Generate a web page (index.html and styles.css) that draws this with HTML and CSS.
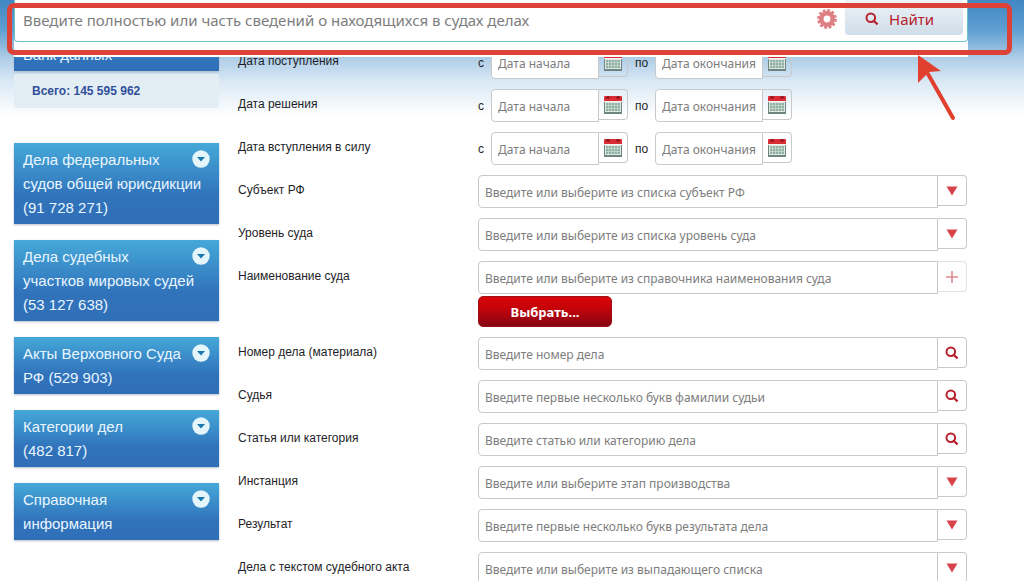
FILE: index.html
```html
<!DOCTYPE html>
<html lang="ru">
<head>
<meta charset="utf-8">
<title>Поиск судебных дел</title>
<link rel="stylesheet" href="styles.css">
</head>
<body>
<svg class="defs" aria-hidden="true">
  <symbol id="lens" viewBox="0 0 14 14"><circle cx="5.8" cy="5.8" r="4.3" fill="none" stroke="#b8202c" stroke-width="2"/><path d="M8 8.2 12.6 12.4" stroke="#b8202c" stroke-width="2.2"/></symbol>
  <symbol id="tri" viewBox="0 0 12 10"><path d="M.5.5h11L6 9.5z" fill="#d6434a"/></symbol>
  <symbol id="plus" viewBox="0 0 12 12"><path d="M6 0v12M0 6h12" stroke="#e58a8e" stroke-width="1.6"/></symbol>
  <symbol id="cal" viewBox="0 0 20 20">
    <path d="M1 6h18v13H1z" fill="#6f8580"/><path d="M2 6h16v11H2z" fill="#dfe8e2"/>
    <path d="M3 8h14v8H3z" fill="#8fb0a2"/>
    <path d="M3 10.5h14M3 13.5h14M5.5 8v8M8.500 8v8M11.500 8v8M14.500 8v8" stroke="#cfe0d6" stroke-width=".7"/>
    <path d="M1 2q0-1 1-1h16q1 0 1 1v4H1z" fill="#d92c34"/>
    <path d="M3.500 2.500h3M13.500 2.500h3" stroke="#7e1118" stroke-width="2"/><path d="M1 6.500h18" stroke="#f4f4f4"/>
  </symbol>
  <symbol id="down" viewBox="0 0 18 18"><circle cx="9" cy="9" r="8.700" fill="#e4f5fb"/><path d="M5 7h8l-4 4.500z" fill="#1b78ae"/></symbol>
</svg>

<header class="top">
  <form class="search">
    <input class="search-text" type="text" aria-label="Поиск" placeholder="Введите полностью или часть сведений о находящихся в судах делах">
    <button class="gear" type="button" aria-label="Настройки">
      <svg width="20" height="20" viewBox="-10 -10 20 20"><circle r="5.700" fill="none" stroke="#de7f84" stroke-width="4.600"/><circle r="8.700" fill="none" stroke="#de7f84" stroke-width="2.400" stroke-dasharray="2.800 1.755"/></svg>
    </button>
    <button class="find" type="button"><svg width="14" height="14"><use href="#lens"/></svg>Найти</button>
  </form>
</header>

<div class="page">
  <nav class="side">
    <section class="bank">
      <button class="block" type="button"><span>Банк данных</span></button>
      <p class="total">Всего: 145 595 962</p>
    </section>
    <button class="block" type="button"><span>Дела федеральных<br>судов общей юрисдикции<br>(91 728 271)</span><svg><use href="#down"/></svg></button>
    <button class="block" type="button"><span>Дела судебных<br>участков мировых судей<br>(53 127 638)</span><svg><use href="#down"/></svg></button>
    <button class="block" type="button"><span>Акты Верховного Суда<br>РФ (529 903)</span><svg><use href="#down"/></svg></button>
    <button class="block" type="button"><span>Категории дел<br>(482 817)</span><svg><use href="#down"/></svg></button>
    <button class="block" type="button"><span>Справочная<br>информация</span><svg><use href="#down"/></svg></button>
  </nav>

  <form class="fields">
    <div class="row">
      <label for="d1">Дата поступления</label>
      <div class="dates">
        <span class="from">с</span><input id="d1" type="text" placeholder="Дата начала"><button class="addon" type="button" aria-label="Календарь"><svg class="cal"><use href="#cal"/></svg></button>
        <span class="to">по</span><input type="text" aria-label="Поступление по" placeholder="Дата окончания"><button class="addon" type="button" aria-label="Календарь"><svg class="cal"><use href="#cal"/></svg></button>
      </div>
    </div>
    <div class="row">
      <label for="d2">Дата решения</label>
      <div class="dates">
        <span class="from">с</span><input id="d2" type="text" placeholder="Дата начала"><button class="addon" type="button" aria-label="Календарь"><svg class="cal"><use href="#cal"/></svg></button>
        <span class="to">по</span><input type="text" aria-label="Решение по" placeholder="Дата окончания"><button class="addon" type="button" aria-label="Календарь"><svg class="cal"><use href="#cal"/></svg></button>
      </div>
    </div>
    <div class="row">
      <label for="d3">Дата вступления в силу</label>
      <div class="dates">
        <span class="from">с</span><input id="d3" type="text" placeholder="Дата начала"><button class="addon" type="button" aria-label="Календарь"><svg class="cal"><use href="#cal"/></svg></button>
        <span class="to">по</span><input type="text" aria-label="Вступление в силу по" placeholder="Дата окончания"><button class="addon" type="button" aria-label="Календарь"><svg class="cal"><use href="#cal"/></svg></button>
      </div>
    </div>
    <div class="row">
      <label for="f1">Субъект РФ</label>
      <div class="combo"><input id="f1" type="text" placeholder="Введите или выберите из списка субъект РФ"><button class="addon" type="button" aria-label="Открыть список"><svg class="tri"><use href="#tri"/></svg></button></div>
    </div>
    <div class="row">
      <label for="f2">Уровень суда</label>
      <div class="combo"><input id="f2" type="text" placeholder="Введите или выберите из списка уровень суда"><button class="addon" type="button" aria-label="Открыть список"><svg class="tri"><use href="#tri"/></svg></button></div>
    </div>
    <div class="row">
      <label for="f3">Наименование суда</label>
      <div class="stack">
        <div class="combo"><input id="f3" type="text" placeholder="Введите или выберите из справочника наименования суда"><button class="addon faint" type="button" aria-label="Добавить"><svg class="plus"><use href="#plus"/></svg></button></div>
        <button class="choose" type="button">Выбрать...</button>
      </div>
    </div>
    <div class="row">
      <label for="f4">Номер дела (материала)</label>
      <div class="combo"><input id="f4" type="text" placeholder="Введите номер дела"><button class="addon" type="button" aria-label="Найти"><svg class="lens"><use href="#lens"/></svg></button></div>
    </div>
    <div class="row">
      <label for="f5">Судья</label>
      <div class="combo"><input id="f5" type="text" placeholder="Введите первые несколько букв фамилии судьи"><button class="addon" type="button" aria-label="Найти"><svg class="lens"><use href="#lens"/></svg></button></div>
    </div>
    <div class="row">
      <label for="f6">Статья или категория</label>
      <div class="combo"><input id="f6" type="text" placeholder="Введите статью или категорию дела"><button class="addon" type="button" aria-label="Найти"><svg class="lens"><use href="#lens"/></svg></button></div>
    </div>
    <div class="row">
      <label for="f7">Инстанция</label>
      <div class="combo"><input id="f7" type="text" placeholder="Введите или выберите этап производства"><button class="addon" type="button" aria-label="Открыть список"><svg class="tri"><use href="#tri"/></svg></button></div>
    </div>
    <div class="row">
      <label for="f8">Результат</label>
      <div class="combo"><input id="f8" type="text" placeholder="Введите первые несколько букв результата дела"><button class="addon" type="button" aria-label="Открыть список"><svg class="tri"><use href="#tri"/></svg></button></div>
    </div>
    <div class="row">
      <label for="f9">Дела с текстом судебного акта</label>
      <div class="combo"><input id="f9" type="text" placeholder="Введите или выберите из выпадающего списка"><button class="addon" type="button" aria-label="Открыть список"><svg class="tri"><use href="#tri"/></svg></button></div>
    </div>
  </form>
</div>

<div class="mark"></div>
<svg class="arrow" width="42" height="68" viewBox="0 0 42 68" aria-hidden="true"><path d="M12 20 37 64" stroke="#e2402f" stroke-width="4" stroke-linecap="round"/><path d="M2 1 25 17 13 18 2 29z" fill="#e2402f"/></svg>
</body>
</html>
```

FILE: styles.css
```css
* { box-sizing: border-box; }

body {
  margin: 0;
  overflow: hidden;
  position: relative;
  font-family: "Liberation Sans", Arial, sans-serif;
  font-size: 12px;
  color: #1e1e28;
  background: #fff linear-gradient(#4187c3 0, #5f9fd2 30px, #aecde7 58px, #dae9f5 82px, #fff 116px) no-repeat;
}

button, input { font: inherit; margin: 0; }
button { cursor: pointer; }

.defs { position: absolute; width: 0; height: 0; }

.top {
  position: fixed;
  z-index: 2;
  top: 0;
  left: 14px;
  right: 56px;
  height: 57px;
  background: #fff;
}

.search {
  display: flex;
  align-items: flex-start;
  height: 42px;
  padding-right: 4px;
  border: 1px solid #6cc0c8;
  border-top: 0;
  border-radius: 0 0 4px 4px;
}

.search-text {
  flex: 1;
  min-width: 0;
  height: 40px;
  padding: 0 8px;
  border: 0;
  background: none;
  font-family: "Noto Sans", sans-serif;
  font-size: 15px;
}
.search-text::placeholder { color: #7d7d7d; opacity: 1; }

.gear {
  display: flex;
  padding: 9px 8px;
  border: 0;
  background: none;
}

.find {
  display: flex;
  align-items: center;
  gap: 10px;
  width: 118px;
  height: 35px;
  padding: 2px 0 0 20px;
  border: 0;
  border-radius: 0 0 4px 4px;
  background: linear-gradient(#eef4f8, #cfdde8);
  font-family: "Noto Sans", sans-serif;
  font-size: 15px;
  color: #b8202c;
}

.page {
  display: flex;
  gap: 19px;
  padding: 39px 57px 0 14px;
  height: 100vh;
}

.side {
  flex: none;
  width: 205px;
  display: flex;
  flex-direction: column;
  gap: 16px;
}

.bank { margin-bottom: 19px; }

.block {
  display: flex;
  justify-content: space-between;
  align-items: flex-start;
  width: 100%;
  padding: 5px 9px 4px;
  border: 0;
  background: linear-gradient(#45a8d8, #3a8cc9 35%, #3173bb 65%, #2f6fb8);
  box-shadow: 0 1px 2px #b4bccb;
  font-size: 15px;
  line-height: 24px;
  text-align: left;
  white-space: nowrap;
  color: #e9f6ff;
}
.block span { flex: 1; width: 0; }
.block svg { flex: none; width: 18px; height: 18px; margin-top: 2px; }
.bank .block { padding-top: 4px; }

.total {
  margin: 3px 0 0;
  padding: 0 18px;
  border-radius: 3px;
  background: #e3eef4;
  font-weight: bold;
  line-height: 34px;
  color: #31509a;
}

.fields {
  flex: 1;
  display: flex;
  flex-direction: column;
  gap: 10px;
  padding-top: 7px;
}

.row { display: flex; align-items: flex-start; }
.row > label { flex: none; width: 240px; padding-top: 7px; line-height: 16px; }

.combo, .dates { flex: 1; display: flex; align-items: flex-start; }
.stack { flex: 1; display: flex; flex-direction: column; align-items: flex-start; gap: 2px; }
.stack .combo { align-self: stretch; }

.fields input {
  flex: 1;
  min-width: 0;
  height: 33px;
  padding: 1px 6px 0;
  border: 1px solid #c9c9c9;
  border-radius: 4px 0 0 4px;
  background: #fff;
  font-family: "Noto Sans", sans-serif;
  font-size: 12px;
}
.fields input::placeholder { color: #7d7d7d; opacity: 1; }
.dates input { flex: none; width: 108px; }

.from, .to { padding-top: 9px; line-height: 16px; }
.from { width: 13px; }
.to { width: 27px; padding-left: 7px; }

.addon {
  flex: none;
  display: flex;
  justify-content: center;
  align-items: center;
  width: 29px;
  height: 31px;
  padding: 0;
  border: 1px solid #c9c9c9;
  border-left: 0;
  border-radius: 0 4px 4px 0;
  background: none;
}
.faint { border-color: #e2e2e2; }

.cal { width: 20px; height: 20px; }
.tri { width: 12px; height: 10px; }
.plus { width: 12px; height: 12px; }
.lens { width: 14px; height: 14px; }

.choose {
  width: 134px;
  height: 31px;
  padding: 0;
  border: 1px solid #a01018;
  border-radius: 5px;
  background: linear-gradient(#d80508, #c40309 40%, #860714);
  font-family: "Noto Sans", sans-serif;
  font-size: 13px;
  font-weight: bold;
  color: #fff;
}

.mark {
  position: absolute;
  z-index: 3;
  top: 3px;
  left: 7px;
  right: 12px;
  height: 52px;
  border: 5px solid #dc4238;
  border-radius: 7px;
  pointer-events: none;
}

.arrow {
  position: absolute;
  z-index: 3;
  top: 54px;
  right: 66px;
  pointer-events: none;
}
```
